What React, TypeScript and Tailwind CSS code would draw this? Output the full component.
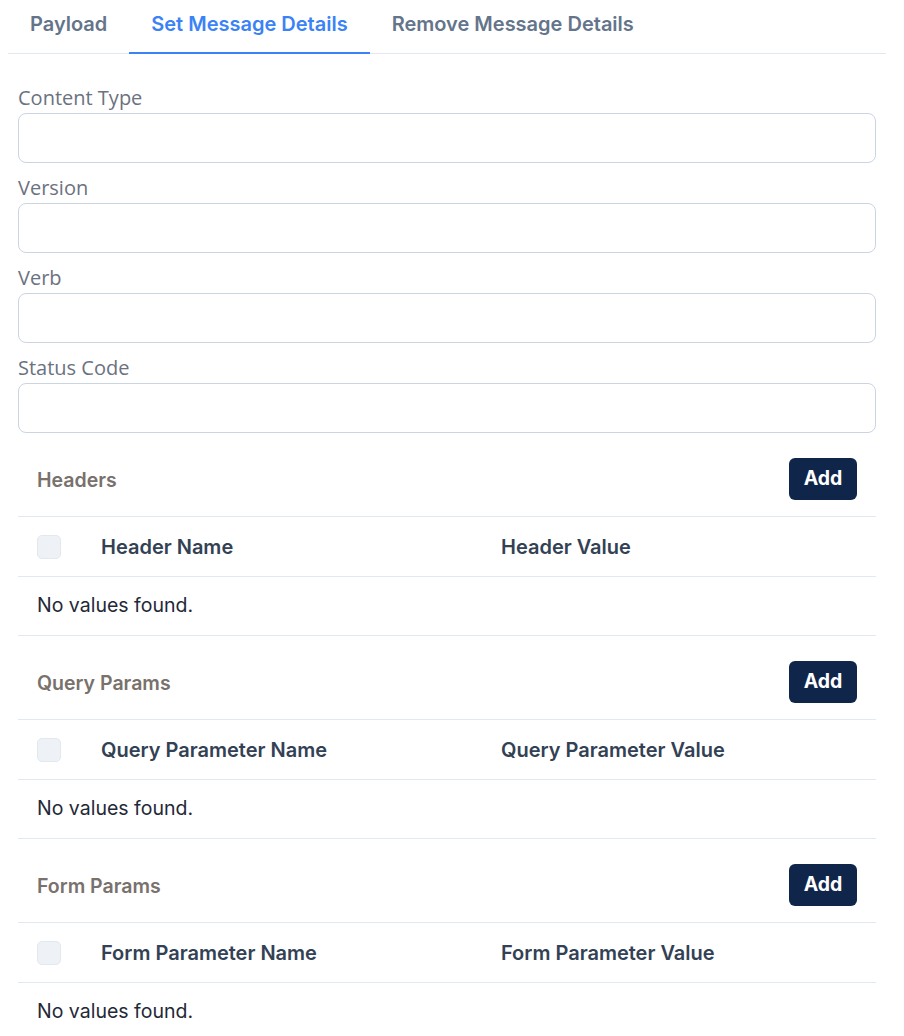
import React from "react";

const fields = ["Content Type", "Version", "Verb", "Status Code"];

const sections = [
  { title: "Headers", name: "Header Name", value: "Header Value" },
  { title: "Query Params", name: "Query Parameter Name", value: "Query Parameter Value" },
  { title: "Form Params", name: "Form Parameter Name", value: "Form Parameter Value" },
];

const tabs = ["Payload", "Set Message Details", "Remove Message Details"];

const ParamTable = ({ title, name, value }: { title: string; name: string; value: string }) => {
  return (
    <section className="pt-[25px]">
      <div className="flex items-center justify-between border-b border-[#e2e8f0] pb-4 pl-[19px] pr-[19px]">
        <h3 className="pt-[3px] text-[19.5px] font-semibold text-[#78716c]">{title}</h3>
        <button className="h-[42px] w-[68px] rounded-md bg-[#10254a] text-[19.5px] font-bold text-white">
          Add
        </button>
      </div>
      <div className="grid h-[60px] grid-cols-[83px_400px_1fr] items-center border-b border-[#e2e8f0]">
        <div className="pl-[19px]">
          <div className="h-6 w-6 rounded-[5px] border border-[#e2e8f0] bg-[#eef2f7]" />
        </div>
        <div className="text-[20px] font-semibold text-[#334155]">{name}</div>
        <div className="text-[20px] font-semibold text-[#334155]">{value}</div>
      </div>
      <div className="flex h-[59px] items-center border-b border-[#e2e8f0] pl-[19px] text-[19.5px] text-[#1f2937]">
        No values found.
      </div>
    </section>
  );
};

export default function App() {
  return (
    <div className="min-h-[1036px] bg-white px-2 font-['Inter',sans-serif]">
      <nav className="flex w-[878px] border-b border-[#e2e8f0]">
        {tabs.map((tab, i) => (
          <button
            key={tab}
            className={
              i === 1
                ? "-mb-px h-[54px] border-b-2 border-[#3b82f6] px-[22px] pb-[5px] text-[20px] font-semibold text-[#3b82f6]"
                : "-mb-px h-[54px] border-b-2 border-transparent px-[22px] pb-[5px] text-[20px] font-semibold text-[#64748b]"
            }
          >
            {tab}
          </button>
        ))}
      </nav>

      <div className="w-[868px] pl-[10px] pt-[32px]">
        <div className="flex flex-col gap-[13px]">
          {fields.map((f) => (
            <label key={f} className="flex flex-col">
              <span className="mb-[3px] font-['Open_Sans',sans-serif] text-[20px] leading-6 text-[#6b7280]">
                {f}
              </span>
              <input className="h-[50px] rounded-lg border border-[#cbd5e1] bg-white px-3 outline-none" />
            </label>
          ))}
        </div>

        {sections.map((s) => (
          <ParamTable key={s.title} {...s} />
        ))}
      </div>
    </div>
  );
}
